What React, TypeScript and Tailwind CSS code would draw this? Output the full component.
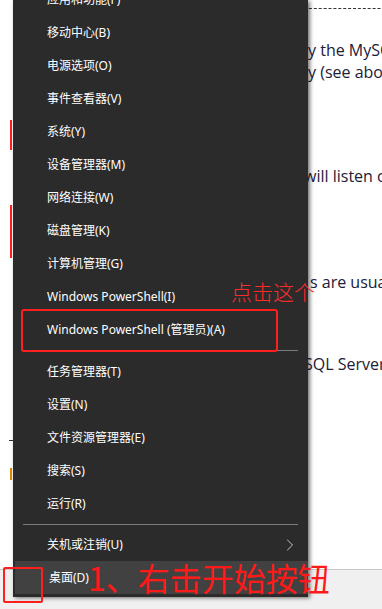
import { ChevronRight } from "lucide-react";

type Entry = { label: string; sep?: false; sub?: boolean; hot?: boolean } | { sep: true; h: string };

const entries: Entry[] = [
  { label: "应用和功能(F)" },
  { label: "移动中心(B)" },
  { label: "电源选项(O)" },
  { label: "事件查看器(V)" },
  { label: "系统(Y)" },
  { label: "设备管理器(M)" },
  { label: "网络连接(W)" },
  { label: "磁盘管理(K)" },
  { label: "计算机管理(G)" },
  { label: "Windows PowerShell(I)" },
  { label: "Windows PowerShell (管理员)(A)" },
  { sep: true, h: "h-[9px]" },
  { label: "任务管理器(T)" },
  { label: "设置(N)" },
  { label: "文件资源管理器(E)" },
  { label: "搜索(S)" },
  { label: "运行(R)" },
  { sep: true, h: "h-[8px]" },
  { label: "关机或注销(U)", sub: true },
  { label: "桌面(D)", hot: true },
];

const App = () => {
  return (
    <div className="relative w-[382px] h-[609px] overflow-hidden bg-white">
      {/* page behind the menu */}
      <div className="flex h-full">
        <div className="w-[2px] h-full bg-[#d2d2d2]" />
        <div className="flex-1 flex flex-col">
          <div
            className="flex-1 flex flex-col pl-[304px] whitespace-nowrap overflow-hidden text-[16px] leading-[22px] text-[#1c2038]"
            style={{ fontFamily: '"Open Sans", "Liberation Sans", sans-serif' }}
          >
            <div className="mt-[8px] border-t border-dashed border-[#333]" />
            <div className="mt-[30px]">ly the MySQL</div>
            <div>ly (see above)</div>
            <div className="mt-[82px]">will listen on</div>
            <div className="mt-[84px] pl-[6px]">s are usually</div>
            <div className="mt-[60px]">SQL Server</div>
          </div>
          <div className="h-[40px] border-t border-[#c8c8c8] bg-[#f0f0f0]" />
        </div>
      </div>

      {/* stray marks of the page at the left */}
      <div className="absolute left-[10px] top-[120px] w-[2px] h-[30px] bg-[#ff2020]" />
      <div className="absolute left-[10px] top-[205px] w-[2px] h-[53px] bg-[#ff2020]" />
      <div className="absolute left-[9px] top-[440px] w-[4px] h-px bg-[#333]" />
      <div className="absolute left-[10px] top-[468px] w-[2px] h-[12px] bg-[#e08a00]" />

      {/* context menu */}
      <div
        className="absolute left-[13px] top-0 w-[295px] h-[597px] bg-[#2b2b2b] shadow-[2px_1px_4px_rgba(0,0,0,0.55)] text-white text-[12px]"
        style={{ fontFamily: '"Noto Sans", "Noto Sans CJK SC", sans-serif' }}
      >
        <div className="flex flex-col -mt-[17px]">
          {entries.map((e, i) =>
            e.sep ? (
              <div key={i} className={`${e.h} flex items-center px-[10px]`}>
                <div className="h-px w-full bg-[#7c7c7c]" />
              </div>
            ) : (
              <div
                key={i}
                className={`h-[33px] flex items-center pl-[34px] pr-[8px] ${e.hot ? "bg-[#414141] ml-[2px] pl-[32px]" : ""}`}
              >
                <span className="flex-1">{e.label}</span>
                {e.sub && <ChevronRight size={20} strokeWidth={1} className="text-[#dfe6ee]" />}
              </div>
            )
          )}
        </div>
      </div>

      {/* annotations */}
      <div className="absolute left-[21px] top-[309px] w-[257px] h-[43px] border-2 border-[#ff1f1f] rounded-[3px]" />
      <div
        className="absolute left-[231px] top-[277px] text-[21px] leading-[28px] text-[#ff2a2a]"
        style={{ fontFamily: '"Noto Sans CJK SC", sans-serif', fontWeight: 300 }}
      >
        点击这个
      </div>
      <div className="absolute left-[3px] top-[567px] w-[40px] h-[36px] border-2 border-[#ff1f1f] rounded-[2px]" />
      <div
        className="absolute left-[88px] top-[556px] text-[32px] leading-[42px] text-[#ff1a1a] whitespace-nowrap"
        style={{ fontFamily: '"Noto Sans CJK SC", sans-serif', fontWeight: 400 }}
      >
        1、右击开始按钮
      </div>
    </div>
  );
};

export default App;
